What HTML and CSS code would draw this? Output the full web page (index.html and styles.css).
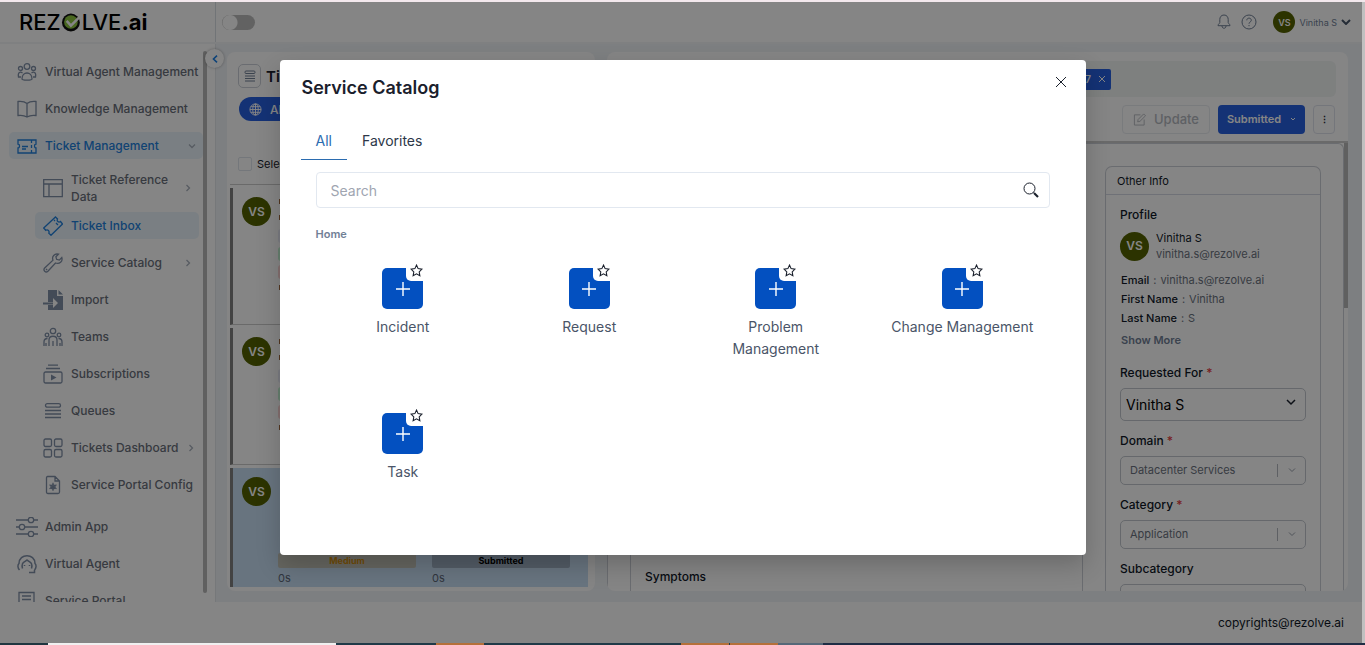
FILE: index.html
```html
<!DOCTYPE html>
<html lang="en">

<head>
  <meta charset="UTF-8">
  <meta name="viewport" content="width=device-width, initial-scale=1.0">
  <title>Service Catalog</title>
  <link rel="stylesheet" href="styles.css">
</head>

<body>
  <div class="top-strip"></div>

  <div class="app">
    <header class="header">
      <div class="logo">REZ<svg class="logo-mark" viewBox="0 0 22 20"><circle cx="9" cy="10" r="8.5" fill="#111"/><circle cx="9" cy="9.500" r="6.500" fill="#8cc63f"/><path d="M5 8.500l4 4.500L20 2" fill="none" stroke="#fff" stroke-width="2.400"/></svg>LVE<b>.ai</b></div>
      <input type="checkbox" class="switch" aria-label="Toggle theme">
      <div class="header-right">
        <button class="icon-button" aria-label="Notifications"><svg width="16" height="16" viewBox="0 0 16 16"><path d="M8 1C5 1 3.800 3.300 3.800 5.500v3C3.800 9.500 2 10 2 11.700h12c0-1.700-1.800-2.200-1.800-3.200v-3C12.200 3.300 11 1 8 1zM6 12c0 3 4 3 4 0"/></svg></button>
        <button class="icon-button" aria-label="Help"><svg width="16" height="16" viewBox="0 0 16 16"><circle cx="8" cy="8" r="7"/><path d="M5.800 6.300c0-3 4.500-2.800 4.500 0C10.300 8 8 8 8 9.700M8 11v1.200"/></svg></button>
        <button class="user-menu"><span class="avatar avatar-small">VS</span>Vinitha S<svg width="10" height="6" viewBox="0 0 10 6"><path d="M1 1l4 4 4-4"/></svg></button>
      </div>
    </header>

    <div class="layout">
      <aside class="sidebar">
        <nav class="menu">
          <a class="menu-item" href="#"><svg viewBox="0 0 20 20"><circle cx="10" cy="4.500" r="2.800"/><circle cx="3.500" cy="6.500" r="2"/><circle cx="16.500" cy="6.500" r="2"/><path d="M5 17c0-8 10-8 10 0 0 1.500-10 1.500-10 0zM4 15H1.500c-1-5 2-5.500 4-4M16 15h2.500c1-5-2-5.500-4-4"/></svg>Virtual Agent Management</a>
          <a class="menu-item" href="#"><svg viewBox="0 0 20 20"><path d="M10 4.500C7 2 4 2.200 1 2.500v14c3-.4 6-.4 9 1.500 3-1.900 6-1.900 9-1.500v-14c-3-.3-6-.5-9 2zM10 4.500V18"/></svg>Knowledge Management</a>
          <a class="menu-item active" href="#"><svg viewBox="0 0 20 20"><path d="M1 4h18v4c-2 0-2 4 0 4v5H1v-5c2 0 2-4 0-4zM14.500 4v3M14.500 9v3M14.500 14v3M5 10.500h6M5 13h4"/></svg>Ticket Management<svg class="chevron" viewBox="0 0 8 8"><path d="M1 2.500l3 3 3-3"/></svg></a>
          <a class="menu-item sub tall" href="#"><svg viewBox="0 0 20 20"><path d="M0.700 1.700h18.600v17H.7zM.7 6h18.600M6 6v12.700"/></svg><span>Ticket Reference Data</span><svg class="chevron" viewBox="0 0 8 8"><path d="M2.500 1l3 3-3 3"/></svg></a>
          <a class="menu-item sub active" href="#"><svg viewBox="0 0 20 20"><path d="M12.500 1l2 2c-1 2 1 4 3 2.500L19.500 8 8 19.300l-2.200-2.200c1-2-1-4-3-2.800L.7 12zM11 4l1 1M13 7l2 2"/></svg>Ticket Inbox</a>
          <a class="menu-item sub" href="#"><svg viewBox="0 0 20 20"><path d="M15.500 1.200c-4-1-7 2.300-5.500 6L1.700 15c-2 2.300 1 5.300 3.200 3.200L12.500 10c4 1.500 7.500-1.500 6.300-5.500l-2.500 2.600-2.700-.8-.7-2.600zM3 16l1.200 1"/></svg>Service Catalog<svg class="chevron" viewBox="0 0 8 8"><path d="M2.500 1l3 3-3 3"/></svg></a>
          <a class="menu-item sub" href="#"><svg viewBox="0 0 20 20"><path class="solid" d="M5 0h9v6h6v14H5v-5h5v3l5-5-5-5v4H5zM15.500 0L20 4.500h-4.500zM0 12.500h10v2H0z"/></svg>Import</a>
          <a class="menu-item sub" href="#"><svg viewBox="0 0 20 20"><circle cx="10" cy="4" r="2.700"/><circle cx="4" cy="8" r="1.800"/><circle cx="16" cy="8" r="1.800"/><path d="M6 19v-6c0-5 8-5 8 0v6M10 14v5M3 19v-3M1 19v-4c0-2 1-3.500 3.500-3.500M17 19v-3M19 19v-4c0-2-1-3.500-3.500-3.500"/></svg>Teams</a>
          <a class="menu-item sub" href="#"><svg viewBox="0 0 20 20"><path d="M5 1.200h10M3 4.500h14"/><rect x="1" y="8" width="18" height="11" rx="1.500"/><path class="solid" d="M8 10.500l5.500 3-5.500 3z"/></svg>Subscriptions</a>
          <a class="menu-item sub" href="#"><svg viewBox="0 0 20 20"><rect x="2.500" y="2.700" width="15" height="3.500" rx="1.700"/><path d="M2 9.500h16M2 13h16M2 16.500h16"/></svg>Queues</a>
          <a class="menu-item sub" href="#"><svg viewBox="0 0 20 20"><rect x="1" y="1" width="7.500" height="7.500" rx="1.500"/><rect x="11.500" y="1" width="7.500" height="7.500" rx="1.500"/><rect x="1" y="11.500" width="7.500" height="7.500" rx="1.500"/><rect x="11.500" y="11.500" width="7.500" height="7.500" rx="1.500"/></svg>Tickets Dashboard<svg class="chevron" viewBox="0 0 8 8"><path d="M2.500 1l3 3-3 3"/></svg></a>
          <a class="menu-item sub" href="#"><svg viewBox="0 0 20 20"><path d="M4.500 1.500H12l4.500 4.500v11c0 1-.5 1.500-1.500 1.500H5c-1 0-1.500-.5-1.500-1.500V3c0-1 .5-1.500 1-1.500zM12 1.500V6h4.500"/><circle cx="10" cy="11.800" r="2"/><path d="M10 7.800v8M6.500 9.800l7 4M6.500 13.800l7-4"/></svg>Service Portal Config</a>
          <a class="menu-item menu-break" href="#"><svg class="wide" viewBox="0 0 22 20"><path d="M0 3h12M18 3h4M0 10h3M9 10h13M0 17h12M18 17h4"/><circle cx="15" cy="3" r="2.700"/><circle cx="6" cy="10" r="2.700"/><circle cx="15" cy="17" r="2.700"/></svg>Admin App</a>
          <a class="menu-item" href="#"><svg viewBox="0 0 20 20"><path d="M2.500 16C.5 14 .5 11 2 9.500 2-1 18-1 18 9.500c1.500 1.500 1.500 4.500-.5 6.500M5.500 14.500C4 8.500 7 8.500 10 6c3 2.500 6 2.500 4.500 8.500M17.500 16v2.500H12M7.500 11v1M12.500 11v1" stroke-width="1.500"/></svg>Virtual Agent</a>
          <a class="menu-item" href="#"><svg viewBox="0 0 20 20"><path d="M2 19V1.500h15V12M5 5h9M5 8.500h9M5 12h5M12 14l3-2 3 3-2 3"/></svg>Service Portal</a>
        </nav>
        <div class="side-scroll"></div>
        <button class="collapse" aria-label="Collapse menu"><svg width="6" height="8" viewBox="0 0 6 8"><path d="M5 .7L1.500 4 5 7.300"/></svg></button>
      </aside>

      <main class="content">
        <section class="panel tickets">
          <div class="tickets-title">
            <span class="title-icon"><svg width="12" height="12" viewBox="0 0 12 12"><rect x="1" y="1" width="10" height="2.500" rx="1"/><path d="M1 6h10M1 8.500h10M1 11h10"/></svg></span>
            <h2>Ticket Inbox</h2>
          </div>
          <button class="filter"><svg width="13" height="13" viewBox="0 0 14 14"><circle cx="7" cy="7" r="6"/><ellipse cx="7" cy="7" rx="3" ry="6"/><path d="M1 7h12M7 1v12M2 4h10M2 10h10"/></svg>All</button>
          <label class="select-all"><input type="checkbox">Select All</label>
          <div class="ticket">
            <span class="avatar">VS</span>
            <div class="ticket-body"><i class="line"></i><i class="line"></i><i class="chip"></i><i class="chip green"></i><i class="chip red"></i><i class="line"></i></div>
          </div>
          <div class="ticket">
            <span class="avatar">VS</span>
            <div class="ticket-body"><i class="line"></i><i class="line"></i><i class="chip"></i><i class="chip green"></i><i class="chip red"></i><i class="line"></i></div>
          </div>
          <div class="ticket selected">
            <span class="avatar">VS</span>
            <div class="ticket-status">
              <div><span class="status medium">Medium</span>0s</div>
              <div><span class="status">Submitted</span>0s</div>
            </div>
          </div>
        </section>

        <section class="panel detail">
          <div class="tag-bar"><span class="tag">7<button aria-label="Close ticket"><svg width="8" height="8" viewBox="0 0 8 8"><path d="M1 1l6 6M7 1L1 7"/></svg></button></span></div>
          <div class="actions">
            <button class="update" disabled><svg width="13" height="13" viewBox="0 0 14 14"><path d="M8 2H1.500v11H12V7M5 9.500l.5-2.500L11.500 1l2 2-6 6z"/></svg>Update</button>
            <button class="submitted">Submitted<svg width="6" height="6" viewBox="0 0 6 6"><path d="M1 2l2 2 2-2"/></svg></button>
            <button class="more" aria-label="More">&#8942;</button>
          </div>
          <div class="detail-body">
            <div class="detail-inner">
              <div class="form-main"><h3>Symptoms</h3></div>
              <div class="info">
                <div class="info-title">Other Info</div>
                <div class="info-body">
                  <h3>Profile</h3>
                  <div class="profile"><span class="avatar">VS</span><div><p class="dark">Vinitha S</p><p>vinitha.s@rezolve.ai</p></div></div>
                  <div class="facts">
                    <p><b>Email</b>:<span>vinitha.s@rezolve.ai</span></p>
                    <p><b>First Name</b>:<span>Vinitha</span></p>
                    <p><b>Last Name</b>:<span>S</span></p>
                    <a href="#">Show More</a>
                  </div>
                  <div class="field large"><label for="requested">Requested For <em>*</em></label>
                    <div class="select"><select id="requested"><option>Vinitha S</option></select><svg width="10" height="8" viewBox="0 0 10 8"><path d="M1 2l4 4 4-4"/></svg></div></div>
                  <div class="field"><label for="domain">Domain <em>*</em></label>
                    <div class="select"><select id="domain"><option>Datacenter Services</option></select><svg width="8" height="8" viewBox="0 0 8 8"><path d="M1 2.500l3 3 3-3"/></svg></div></div>
                  <div class="field"><label for="category">Category <em>*</em></label>
                    <div class="select"><select id="category"><option>Application</option></select><svg width="8" height="8" viewBox="0 0 8 8"><path d="M1 2.500l3 3 3-3"/></svg></div></div>
                  <div class="field"><label for="subcategory">Subcategory</label>
                    <div class="select"><select id="subcategory"></select></div></div>
                </div>
              </div>
            </div>
            <div class="detail-scroll"></div>
          </div>
        </section>
      </main>
    </div>

    <footer class="footer">copyrights@rezolve.ai</footer>

    <div class="overlay">
      <div class="modal" role="dialog" aria-labelledby="modal-title">
        <div class="modal-header">
          <h1 id="modal-title">Service Catalog</h1>
          <button class="close" aria-label="Close"><svg width="12" height="12" viewBox="0 0 12 12"><path d="M1 1l10 10M11 1L1 11"/></svg></button>
        </div>
        <div class="tabs">
          <button class="tab current">All</button>
          <button class="tab">Favorites</button>
        </div>
        <div class="modal-body">
          <div class="search">
            <input type="text" placeholder="Search" aria-label="Search">
            <svg width="16" height="16" viewBox="0 0 16 16"><circle cx="6.500" cy="6.500" r="5.500"/><path d="M10.500 10.500l1 1"/><path class="handle" d="M11 11l4 4"/></svg>
          </div>
          <a class="crumb" href="#">Home</a>
        </div>
        <div class="catalog">
          <div class="item"><button class="tile" aria-label="Incident"><svg class="plus" viewBox="0 0 14 14"><path d="M7 0v14M0 7h14"/></svg><span class="star"><svg viewBox="0 0 24 24"><path d="M12 2l3 6.500 7 1-5 5 1.200 7L12 18l-6.200 3.500L7 14.500l-5-5 7-1z"/></svg></span></button>Incident</div>
          <div class="item"><button class="tile" aria-label="Request"><svg class="plus" viewBox="0 0 14 14"><path d="M7 0v14M0 7h14"/></svg><span class="star"><svg viewBox="0 0 24 24"><path d="M12 2l3 6.500 7 1-5 5 1.200 7L12 18l-6.200 3.500L7 14.500l-5-5 7-1z"/></svg></span></button>Request</div>
          <div class="item"><button class="tile" aria-label="Problem Management"><svg class="plus" viewBox="0 0 14 14"><path d="M7 0v14M0 7h14"/></svg><span class="star"><svg viewBox="0 0 24 24"><path d="M12 2l3 6.500 7 1-5 5 1.200 7L12 18l-6.200 3.500L7 14.500l-5-5 7-1z"/></svg></span></button>Problem Management</div>
          <div class="item"><button class="tile" aria-label="Change Management"><svg class="plus" viewBox="0 0 14 14"><path d="M7 0v14M0 7h14"/></svg><span class="star"><svg viewBox="0 0 24 24"><path d="M12 2l3 6.500 7 1-5 5 1.200 7L12 18l-6.200 3.500L7 14.500l-5-5 7-1z"/></svg></span></button>Change Management</div>
          <div class="item"><button class="tile" aria-label="Task"><svg class="plus" viewBox="0 0 14 14"><path d="M7 0v14M0 7h14"/></svg><span class="star"><svg viewBox="0 0 24 24"><path d="M12 2l3 6.500 7 1-5 5 1.200 7L12 18l-6.200 3.500L7 14.500l-5-5 7-1z"/></svg></span></button>Task</div>
        </div>
      </div>
    </div>
  </div>

  <div class="taskbar"></div>
</body>

</html>
```

FILE: styles.css
```css
* {
  box-sizing: border-box;
}

body {
  font-family: Inter, "Liberation Sans", sans-serif;
  font-size: 13px;
  margin: 0;
  height: 100vh;
  display: flex;
  flex-direction: column;
  overflow: hidden;
  background-color: #c0c0c0;
}

h1, h2, h3, p {
  margin: 0;
}

button, input, select {
  font-family: inherit;
}

button {
  border: none;
  background: none;
  padding: 0;
  cursor: pointer;
}

a {
  text-decoration: none;
}

svg {
  fill: none;
  stroke: currentColor;
  flex: none;
}

.top-strip {
  height: 2px;
  background-color: #f3e8ed;
}

.app {
  flex: 1;
  min-height: 0;
  margin-right: 3px;
  position: relative;
  display: flex;
  flex-direction: column;
  background-color: #fff;
}

.taskbar {
  height: 2px;
  background: linear-gradient(to right, #203640 48px, #f0f0f0 48px 336px, #203a48 336px 436px, #b5703a 436px 484px, #203a48 484px 681px, #b5703a 681px 729px, #203a48 729px 730px, #b5703a 730px 778px, #566878 778px 823px, #1f2d45 823px);
}

/* header */
.header {
  height: 42px;
  display: flex;
  align-items: center;
  border-bottom: 2px solid #f3f5f8;
}

.logo {
  width: 216px;
  height: 40px;
  padding-left: 19px;
  display: flex;
  align-items: center;
  border-right: 1px solid #d9dee4;
  font-size: 22px;
  font-weight: 500;
  line-height: 36px;
  color: #000;
}

.logo-mark {
  width: 24px;
  height: 21px;
  margin-right: -3px;
  stroke: none;
}

.logo b {
  font-weight: 700;
}

.switch {
  appearance: none;
  width: 33px;
  height: 15px;
  margin: 0 0 0 6px;
  border-radius: 8px;
  background: radial-gradient(circle at 8px 50%, #fff 7px, #bdbdbd 8px);
}

.header-right {
  margin-left: auto;
  padding-right: 11px;
  display: flex;
  align-items: center;
  gap: 9px;
  color: #718096;
}

.icon-button {
  color: inherit;
  display: flex;
}

.user-menu {
  display: flex;
  align-items: center;
  gap: 4px;
  margin-left: 7px;
  font-size: 9px;
  color: #718096;
}

.user-menu svg {
  stroke: #475569;
  stroke-width: 2;
}

.avatar {
  width: 29px;
  height: 29px;
  flex: none;
  border-radius: 50%;
  background-color: #556200;
  color: #fff;
  font-size: 12px;
  font-weight: 600;
  display: flex;
  align-items: center;
  justify-content: center;
}

.avatar-small {
  width: 22px;
  height: 22px;
  font-size: 9px;
}

/* sidebar */
.layout {
  flex: 1;
  min-height: 0;
  display: flex;
}

.sidebar {
  width: 216px;
  flex: none;
  position: relative;
  display: flex;
  border-right: 1px solid #e2e6ea;
}

.menu {
  flex: 1;
  padding: 14px 0 0 9px;
  display: flex;
  flex-direction: column;
  gap: 10px;
  overflow: hidden;
}

.menu-item {
  min-height: 27px;
  flex: none;
  padding: 0 7px 0 8px;
  display: flex;
  align-items: center;
  gap: 8px;
  border-radius: 5px;
  font-size: 12px;
  font-weight: 500;
  line-height: 17px;
  white-space: nowrap;
  color: #6a707b;
}

.menu-item svg {
  width: 20px;
  height: 20px;
  color: #8090a8;
  stroke-width: 1.3;
}

.menu-item svg.wide {
  width: 22px;
  margin: 0 -1px;
}

.menu-item .solid {
  fill: currentColor;
  stroke: none;
}

.menu-item.sub {
  margin: 0 4px 0 26px;
}

.menu-item.tall {
  height: 33px;
  padding-top: 5px;
  white-space: normal;
}

.menu-item.active,
.menu-item.active svg {
  color: #2280dd;
}

.menu-item.active {
  background-color: #eaf4fb;
}

.menu-item svg.chevron {
  width: 8px;
  height: 8px;
  margin-left: auto;
  color: #a8b0bc;
}

.menu-break {
  margin-top: 5px;
}

.side-scroll {
  width: 4px;
  margin: 7px 8px 9px 0;
  border-radius: 2px;
  background-color: #b8b8b8;
}

.collapse {
  position: absolute;
  top: 5px;
  right: -9px;
  width: 19px;
  height: 19px;
  border-radius: 50%;
  background-color: #fff;
  box-shadow: 0 0 3px rgba(0, 0, 0, 0.3);
  display: flex;
  align-items: center;
  justify-content: center;
  color: #1a80e8;
  stroke-width: 1.6;
}

/* content */
.content {
  flex: 1;
  min-width: 0;
  padding: 8px 14px 11px 11px;
  display: flex;
  gap: 12px;
  background-color: #f0f3f7;
}

.panel {
  background-color: #fff;
  border-radius: 8px;
  overflow: hidden;
}

.tickets {
  flex: 0 0 368px;
  padding: 12px 7px 4px 3px;
  display: flex;
  flex-direction: column;
  align-items: flex-start;
}

.tickets-title {
  display: flex;
  align-items: center;
  gap: 5px;
  margin-left: 8px;
}

.tickets-title h2 {
  font-size: 15px;
  font-weight: 600;
  color: #1a202c;
}

.title-icon {
  width: 23px;
  height: 24px;
  border: 1px solid #cbd0d8;
  border-radius: 5px;
  display: flex;
  align-items: center;
  justify-content: center;
  color: #718096;
}

.filter {
  height: 24px;
  margin: 9px 0 0 9px;
  padding: 0 16px 0 10px;
  border-radius: 12px;
  background-color: #2860e0;
  color: #fff;
  font-size: 12px;
  font-weight: 500;
  display: flex;
  align-items: center;
  gap: 8px;
}

.select-all {
  width: 100%;
  height: 64px;
  flex: none;
  padding: 22px 0 0 8px;
  display: flex;
  align-items: center;
  gap: 5px;
  border-bottom: 1px solid #ccc;
  font-size: 11px;
  color: #1a202c;
}

.select-all input {
  appearance: none;
  width: 14px;
  height: 14px;
  margin: 0;
  border: 1px solid #dfe4ec;
  border-radius: 2px;
}

.ticket {
  width: 100%;
  height: 137px;
  flex: none;
  margin-top: 3px;
  padding: 9px 0 0 9px;
  border-left: 3px solid #808080;
  border-bottom: 1px solid #ccc;
  display: flex;
  gap: 7px;
}

.ticket.selected {
  flex: 1;
  padding-bottom: 1px;
  border-bottom: none;
  background-color: #c8dff4;
}

.ticket-body {
  flex: 1;
  display: flex;
  flex-direction: column;
  gap: 4px;
}

.line {
  width: 2px;
  height: 5px;
  margin: 2px 0 5px 1px;
  background-color: #a06a40;
}

.chip {
  height: 14px;
  border-radius: 3px;
  background-color: #eceefa;
}

.chip.green {
  background-color: #c6f6d5;
}

.chip.red {
  background-color: #fed7d7;
}

.ticket-status {
  flex: 1;
  padding-right: 18px;
  align-self: flex-end;
  display: grid;
  grid-template-columns: 1fr 1fr;
  gap: 16px;
  font-size: 11px;
  line-height: 16px;
  color: #5c6778;
}

.status {
  display: block;
  height: 15px;
  margin-bottom: 2px;
  line-height: 15px;
  border-radius: 2px;
  background-color: #a0b0c4;
  color: #000;
  font-size: 9px;
  font-weight: 700;
  text-align: center;
}

.status.medium {
  background-color: #c4c4b8;
  color: #d69010;
}

.detail {
  flex: 1;
  display: flex;
  flex-direction: column;
}

.tag-bar {
  height: 36px;
  flex: none;
  margin: 9px 12px 0;
  padding-right: 225px;
  border-radius: 6px;
  background-color: #f1f5f4;
  display: flex;
  justify-content: flex-end;
  align-items: center;
}

.tag {
  height: 21px;
  padding: 0 5px 0 30px;
  border-radius: 2px;
  background-color: #2860e0;
  color: #fff;
  font-size: 10px;
  font-weight: 600;
  display: flex;
  align-items: center;
  gap: 7px;
}

.tag button {
  color: #fff;
  display: flex;
}

.actions {
  height: 46px;
  flex: none;
  padding-right: 13px;
  display: flex;
  align-items: center;
  justify-content: flex-end;
  gap: 8px;
  border-bottom: 2px solid #ccc;
}

.actions button {
  height: 29px;
  border-radius: 4px;
  display: flex;
  align-items: center;
  justify-content: center;
}

.actions .update {
  width: 88px;
  gap: 8px;
  border: 1px solid #e8ebf0;
  color: #b5b9bf;
  font-size: 13px;
  font-weight: 500;
}

.actions .submitted {
  width: 87px;
  gap: 9px;
  background-color: #2860e0;
  color: #fff;
  font-size: 11px;
  font-weight: 600;
}

.actions .more {
  width: 22px;
  border: 1px solid #dfe3ec;
  color: #1a202c;
  font-size: 9px;
  font-weight: 700;
}

.detail-body {
  flex: 1;
  min-height: 0;
  display: flex;
}

.detail-inner {
  flex: 1;
  padding: 22px 22px 0;
  display: flex;
  gap: 22px;
  border: 1px solid #ccd0d6;
  border-bottom: none;
  border-radius: 0 6px 0 0;
}

.detail-scroll {
  width: 4px;
  height: 165px;
  background-color: #b8b8b8;
}

.form-main {
  flex: 1;
  padding: 0 14px 6px;
  border: 1px solid #ccd0d6;
  border-bottom: none;
  display: flex;
  align-items: flex-end;
}

h3 {
  font-size: 12px;
  font-weight: 500;
  line-height: 16px;
  color: #101828;
}

.info {
  width: 216px;
  border: 1px solid #ccd0d6;
  border-bottom: none;
  border-radius: 7px 7px 0 0;
}

.info-title {
  height: 28px;
  padding-left: 11px;
  line-height: 28px;
  border-bottom: 1px solid #d5d8e4;
  font-size: 11px;
  color: #101828;
}

.info-body {
  padding: 12px 14px 0;
  font-size: 11px;
  color: #6c7380;
}

.profile {
  margin-top: 7px;
  display: flex;
  align-items: center;
  gap: 7px;
  line-height: 16px;
}

.profile .dark,
.facts b {
  color: #101828;
  font-weight: 400;
}

.facts {
  margin: 9px 1px 0;
  line-height: 19px;
}

.facts b {
  font-weight: 500;
  margin-right: 4px;
}

.facts span {
  margin-left: 4px;
}

.facts a {
  display: block;
  margin-top: 3px;
  font-weight: 600;
  color: #718096;
}

.field {
  margin-top: 10px;
}

.facts + .field {
  margin-top: 13px;
}

.field label {
  display: block;
  margin-bottom: 5px;
  font-size: 12px;
  font-weight: 500;
  line-height: 20px;
  color: #101828;
}

.field em {
  font-style: normal;
  color: #e53e3e;
}

.select {
  position: relative;
  color: #9aa1ac;
}

.select svg {
  position: absolute;
  top: 10px;
  right: 10px;
}

.select select {
  appearance: none;
  display: block;
  width: 100%;
  height: 29px;
  padding: 0 9px 2px;
  border: 1px solid #c3c8cf;
  border-radius: 5px;
  background: linear-gradient(#b4b9c0, #b4b9c0) right 27px center / 1px 13px no-repeat;
  color: #6c7380;
  font-size: 11px;
}

.large .select {
  color: #1a202c;
  stroke-width: 1.5;
}

.large .select select {
  height: 33px;
  padding: 0 5px;
  background: none;
  color: #000;
  font-size: 14px;
}

.footer {
  height: 41px;
  flex: none;
  padding-right: 18px;
  line-height: 41px;
  text-align: right;
  font-size: 12px;
  color: #101828;
}

/* modal */
.overlay {
  position: absolute;
  inset: 0;
  padding: 58px 0 0 3px;
  display: flex;
  justify-content: center;
  align-items: flex-start;
  background-color: rgba(0, 0, 0, 0.48);
}

.modal {
  width: 60vw;
  max-width: 806px;
  padding-bottom: 72px;
  border-radius: 4px;
  background-color: #fff;
  box-shadow: 0 10px 25px rgba(0, 0, 0, 0.2);
}

.modal-header {
  padding: 12px 19px 0 22px;
  display: flex;
  justify-content: space-between;
}

.modal-header h1 {
  font-size: 18px;
  font-weight: 600;
  line-height: 32px;
  color: #1a202c;
}

.close {
  height: 19px;
  display: flex;
  align-items: center;
  color: #1a202c;
}

.tabs {
  margin: 18px 21px 0;
  display: flex;
}

.tab {
  padding: 0 15px;
  height: 38px;
  border-bottom: 1px solid transparent;
  font-size: 14px;
  color: #2d3748;
}

.tab.current {
  border-bottom-color: #2b6cb0;
  color: #2b6cb0;
}

.modal-body {
  padding: 12px 36px 0;
}

.search {
  height: 36px;
  padding: 0 10px 0 14px;
  display: flex;
  align-items: center;
  border: 1px solid #e2e8f0;
  border-radius: 4px;
  color: #1a202c;
}

.search input {
  flex: 1;
  min-width: 0;
  padding: 0;
  border: none;
  outline: none;
  font-size: 14px;
}

.search input::placeholder {
  color: #a0a5b1;
}

.search .handle {
  stroke-width: 2.2;
}

.crumb {
  display: block;
  margin-top: 18px;
  font-size: 11px;
  font-weight: 600;
  line-height: 16px;
  color: #718096;
}

.catalog {
  padding: 26px 30px 0;
  display: grid;
  grid-template-columns: repeat(4, 1fr);
  grid-template-rows: 145px;
}

.item {
  padding: 0 21px;
  display: flex;
  flex-direction: column;
  align-items: center;
  gap: 7px;
  text-align: center;
  font-size: 14px;
  line-height: 22px;
  color: #4a5568;
}

.tile {
  position: relative;
  width: 41px;
  height: 41px;
  flex: none;
  border-radius: 5px;
  background-color: #0350c0;
  color: #fff;
  display: flex;
  align-items: center;
  justify-content: center;
}

.plus {
  width: 14px;
  height: 14px;
  stroke-width: 1.4;
}

.star {
  position: absolute;
  top: -4px;
  right: 0;
  width: 17px;
  height: 17px;
  padding-left: 4px;
  border-radius: 0 0 0 5px;
  background-color: #fff;
  color: #1a202c;
}

.star svg {
  display: block;
  width: 13px;
  height: 13px;
  stroke-width: 2;
}
```
